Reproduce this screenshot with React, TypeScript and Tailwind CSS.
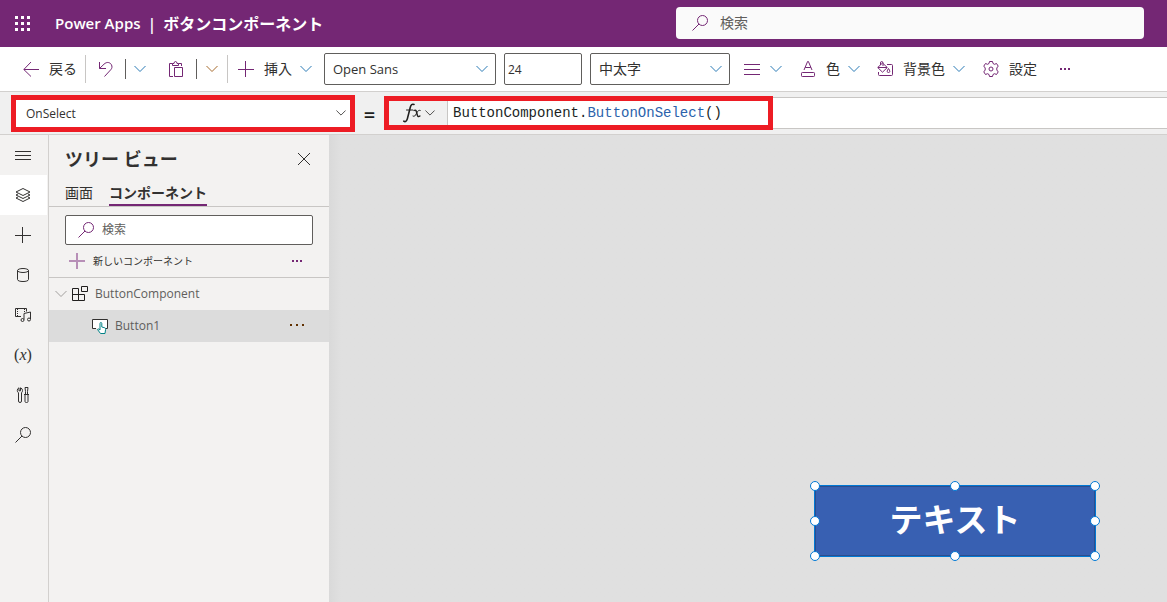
import React, { useState } from "react";

type IconProps = { className?: string; children: React.ReactNode; box?: string };

function Icon({ className = "size-4", children, box = "0 0 16 16" }: IconProps) {
  return (
    <svg viewBox={box} className={`shrink-0 ${className}`} fill="none" stroke="currentColor" strokeWidth="1" aria-hidden="true">
      {children}
    </svg>
  );
}

const Chevron = ({ className = "w-3 h-2 text-[#2a7ab5]" }: { className?: string }) => (
  <Icon box="0 0 12 8" className={className}>
    <path d="M.5 1 6 6.5 11.5 1" />
  </Icon>
);

const Search = ({ className = "size-4" }: { className?: string }) => (
  <Icon className={className}>
    <circle cx="10.5" cy="5.5" r="5" />
    <path d="M7 9 .5 15.5" />
  </Icon>
);

const Plus = ({ className = "size-4" }: { className?: string }) => (
  <Icon className={className}>
    <path d="M7.5 0v16M0 8.5h16" />
  </Icon>
);

const Dots = ({ className = "w-3 h-2" }: { className?: string }) => (
  <Icon box="0 0 12 8" className={className}>
    <path d="M1 3h2v2H1zM5 3h2v2H5zM9 3h2v2H9z" fill="currentColor" stroke="none" />
  </Icon>
);

const Rule = ({ tall = false }: { tall?: boolean }) => (
  <span className={tall ? "h-7 w-px bg-[#c8c6c4]" : "h-5 w-px bg-[#605e5c]"} />
);

type FieldProps = { label: string; options: string[]; className: string; chevron: string; pad?: string };

function Dropdown({ label, options, className, chevron, pad = "pl-2" }: FieldProps) {
  return (
    <div className={`grid items-center ${className}`}>
      <select
        aria-label={label}
        className={`h-full w-full appearance-none bg-transparent pr-6 text-[#323130] outline-none [grid-area:1/1] ${pad}`}
      >
        {options.map((o) => (
          <option key={o}>{o}</option>
        ))}
      </select>
      <Chevron className={`pointer-events-none h-2 justify-self-end [grid-area:1/1] ${chevron}`} />
    </div>
  );
}

function Header() {
  return (
    <header className="flex h-[47px] items-center bg-[#742774] pl-[15px] pr-[23px] text-white">
      <button aria-label="アプリ起動ツール" className="size-4">
        <svg viewBox="0 0 16 16" className="size-4" fill="currentColor" aria-hidden="true">
          {[0, 6, 12].map((y) => [0, 6, 12].map((x) => <rect key={`${x}-${y}`} x={x} y={y} width="3" height="3" />))}
        </svg>
      </button>
      <h1 className="ml-6 flex items-center gap-[7px] whitespace-nowrap font-semibold">
        <span className="text-[15px]">Power Apps</span>
        <span>|</span>
        <span className="text-base font-bold">ボタンコンポーネント</span>
      </h1>
      <label className="mb-px ml-auto flex h-8 w-[468px] items-center gap-3 rounded bg-[#fafafa] pl-4 text-[#742774]">
        <Search />
        <input aria-label="検索" placeholder="検索" className="min-w-0 flex-1 bg-transparent text-sm outline-none placeholder:text-[#605e5c]" />
      </label>
    </header>
  );
}

function Toolbar() {
  return (
    <div role="toolbar" className="flex h-[45px] items-center whitespace-nowrap border-b border-[#d2d0ce] bg-white pl-[23px] text-sm text-[#323130]">
      <button className="flex items-center gap-[10px]">
        <Icon className="size-4 text-[#742774]">
          <path d="M8 1 .8 8.500l7.200 7M1 8.500h15" />
        </Icon>
        戻る
      </button>
      <div className="ml-2 flex items-center">
        <Rule tall />
        <button aria-label="元に戻す" className="ml-3 mr-[11px] text-[#742774]">
          <Icon>
            <path d="M1.5 1v6.5H8M1.5 7.5 6 3.200c3-2.900 6-1.700 7.300.3 1.200 2 .7 4-.6 5.300L6.500 15.500" />
          </Icon>
        </button>
        <Rule />
        <button aria-label="元に戻すオプション" className="ml-2 mr-[22px]"><Chevron /></button>
        <button aria-label="貼り付け" className="mr-3 text-[#742774]">
          <Icon>
            <path d="M5 15.500H1.500v-13h3M10.500 2.500h3V5M4.500 4.500v-2H6q0-2 1.500-2t1.500 2h1.500v2zM6.500 6.500h8v9h-8z" />
          </Icon>
        </button>
        <Rule />
        <button aria-label="貼り付けオプション" className="mx-[9px]"><Chevron className="h-2 w-3 text-[#a66a2c]" /></button>
        <Rule tall />
      </div>
      <button className="ml-[10px] flex items-center gap-2">
        <Plus className="mr-[2px] size-4 text-[#742774]" />
        挿入
        <Chevron />
      </button>
      <Dropdown label="フォント" options={["Open Sans"]} className="ml-3 h-8 w-[172px] rounded-xs border border-[#605e5c] text-[13px]" chevron="w-3 mr-[7px] text-[#2a7ab5]" />
      <input aria-label="フォント サイズ" defaultValue="24" className="ml-2 h-8 w-[78px] rounded-xs border border-[#605e5c] pl-[3px] text-xs outline-none" />
      <Dropdown label="フォントの太さ" options={["中太字"]} className="ml-2 h-8 w-[140px] rounded-xs border border-[#605e5c] text-sm" chevron="w-3 mr-[7px] text-[#2a7ab5]" />
      <button aria-label="配置" className="ml-[14px] flex items-center gap-[10px]">
        <Icon className="size-4 text-[#742774]"><path d="M0 3.500h16M0 8.500h16M0 13.500h16" /></Icon>
        <Chevron />
      </button>
      <button className="ml-[18px] flex items-center gap-2">
        <Icon className="mr-[2px] size-4 text-[#742774]">
          <path d="M4 9 7.600.5h.8L12 9M5.200 6.500h5.600" />
          <rect x="1.500" y="11.500" width="13" height="4" rx=".8" />
        </Icon>
        色
        <Chevron />
      </button>
      <button className="ml-[17px] flex items-center gap-2">
        <Icon className="mr-[2px] size-4 text-[#742774]">
          <path d="M10 3.500h4.500q1 0 1 1v9q0 1-1 1h-12q-1 0-1-1V11" />
          <path d="M.7 6.500 5.500 2l4.800 4.500-4.800 4.700zM1 6.500h9M3.500 4V2q0-1.500 1.200-1.500T6 2v3" />
          <path d="M11.500 7.500c1.600 2.300 1.900 4 0 4s-1.600-1.700 0-4z" />
        </Icon>
        背景色
        <Chevron />
      </button>
      <button className="ml-[18px] flex items-center gap-[10px]">
        <Icon className="size-4 text-[#742774]">
          <path d="M6.500.5h3l.5 2 1.500.8 2-.8 1.700 2.600L13.800 7v2l1.400 1.900-1.700 2.600-2-.8-1.500.8-.5 2h-3l-.5-2-1.500-.8-2 .8L.8 10.900 2.200 9V7L.8 5.100l1.700-2.600 2 .8L6 2.500z" />
          <circle cx="8" cy="8" r="2" />
        </Icon>
        設定
      </button>
      <button aria-label="その他" className="ml-[22px] text-[#742774]"><Dots /></button>
    </div>
  );
}

function FormulaBar() {
  const [formula, setFormula] = useState("ButtonComponent.ButtonOnSelect()");
  const parts = formula.split(/(ButtonOnSelect)/);
  return (
    <div className="flex h-[43px] items-center border-b border-[#d2d0ce] bg-[#f0f0f0] pl-[11px]">
      <Dropdown label="プロパティ" options={["OnSelect"]} className="h-[37px] w-[344px] border-5 border-[#ed1c24] bg-white text-xs" pad="pl-[10px] pt-[2px]" chevron="w-[10px] mr-1 text-[#323130]" />
      <span className="w-[29px] pt-1 text-center text-xl font-semibold text-[#201f1e]">=</span>
      <div className="flex h-[34px] w-[389px] border-5 border-[#ed1c24] bg-white">
        <button aria-label="数式" className="flex w-[59px] items-center gap-1 border-r border-[#c8c6c4] bg-[#f0f0f0] pl-[14px]">
          <svg viewBox="0 0 18 20" className="h-5 w-[18px] text-[#201f1e]" fill="none" stroke="currentColor" strokeLinecap="round" aria-hidden="true">
            <path d="M.8 18.200c1.600 1.200 3-.2 3.600-2.600L7.300 4.200C7.900 1.700 9.200.6 11 1.500" strokeWidth="1.600" />
            <path d="M3.500 7h6.300" />
            <path d="M11 7.500c1.500-.9 2.200 0 2.500 1.500l.8 3c.4 1.600 1.200 2.200 2.600 1" strokeWidth="1.400" />
            <path d="M17.200 7.400c-2-.8-3 1.600-4 3.500-.9 1.800-1.700 3-3.200 2.200" />
          </svg>
          <Chevron className="h-2 w-[10px] text-[#323130]" />
        </button>
        <div className="grid flex-1 items-center pl-[5px] font-[Liberation_Mono,monospace] text-sm">
          <span aria-hidden="true" className="text-[#201f1e] [grid-area:1/1]">
            {parts.map((p, i) => (
              <span key={i} className={p === "ButtonOnSelect" ? "text-[#2b62ab]" : ""}>{p}</span>
            ))}
          </span>
          <input
            aria-label="数式の入力"
            value={formula}
            onChange={(e) => setFormula(e.target.value)}
            className="min-w-0 bg-transparent text-transparent caret-black outline-none [grid-area:1/1]"
          />
        </div>
      </div>
      <div className="h-8 flex-1 border-y border-[#c8c6c4] bg-white" />
    </div>
  );
}

const railItems: { label: string; icon: React.ReactNode }[] = [
  { label: "メニュー", icon: <Icon><path d="M0 4.500h16M0 8.500h16M0 12.500h16" /></Icon> },
  {
    label: "ツリー ビュー",
    icon: <Icon><path d="m8 1.500 7 3.500-7 3.500L1 5zM3 7 1 8l7 3.500L15 8l-2-1M3 10l-2 1 7 3.500 7-3.500-2-1" /></Icon>,
  },
  { label: "挿入", icon: <Plus /> },
  {
    label: "データ",
    icon: <Icon><ellipse cx="8" cy="3.500" rx="5.500" ry="2" /><path d="M2.500 3.500v9c0 2.700 11 2.700 11 0v-9" /></Icon>,
  },
  {
    label: "メディア",
    icon: (
      <Icon>
        <path d="M6 9.500H.5v-8h11v3M9 12.500v-6l6.500-1.500v7" />
        <path d="M2.500 2v7M9.500 2v3" strokeDasharray="1 1" />
        <circle cx="7.500" cy="13" r="1.500" /><circle cx="14" cy="12.500" r="1.500" />
      </Icon>
    ),
  },
  { label: "変数", icon: <span className="font-[Liberation_Serif,serif] text-base leading-none">(<i>x</i>)</span> },
  {
    label: "詳細ツール",
    icon: (
      <Icon>
        <path d="M4 .8v3h1.500v-3Q7.500 1.500 7.500 3.500 7.500 5 6.500 5.800V14q0 1.500-1.500 1.500T3.500 14V5.800Q2.300 5 2.300 3.500 2.300 1.500 4 .8M10 .5h3l-.5 4v3h-2v-3zM9 7.500h5M10 8v6.500q0 1 1.500 1t1.500-1V8" />
      </Icon>
    ),
  },
  { label: "検索", icon: <Search /> },
];

function Rail() {
  return (
    <nav className="w-[49px] shrink-0 border-r border-[#d2d0ce] text-[#323130]">
      {railItems.map((item) => (
        <button
          key={item.label}
          aria-label={item.label}
          className={`flex h-10 w-[47px] items-center justify-center pr-px ${item.label === "ツリー ビュー" ? "bg-white" : ""}`}
        >
          {item.icon}
        </button>
      ))}
    </nav>
  );
}

function TreePanel() {
  return (
    <aside className="w-[280px] shrink-0 text-[#323130]">
      <div className="flex h-[46px] items-center justify-between pl-4 pr-[18px] pt-[2px]">
        <h2 className="text-lg font-bold">ツリー ビュー</h2>
        <button aria-label="閉じる">
          <Icon className="size-[14px]" box="0 0 14 14"><path d="m1 1 12 12M13 1 1 13" /></Icon>
        </button>
      </div>
      <div role="tablist" className="flex h-[26px] items-stretch gap-4 border-b border-[#c8c6c4] pl-4 text-sm leading-5">
        <button role="tab" aria-selected="false" className="border-b-2 border-transparent">画面</button>
        <button role="tab" aria-selected="true" className="border-b-2 border-[#742774] font-semibold">コンポーネント</button>
      </div>
      <label className="mx-4 mt-2 flex h-[30px] items-center gap-2 rounded-xs border border-[#605e5c] bg-white pl-3 text-[#742774]">
        <Search />
        <input aria-label="検索" placeholder="検索" className="min-w-0 flex-1 bg-transparent text-xs outline-none placeholder:text-[#605e5c]" />
      </label>
      <div className="flex h-[33px] items-center justify-between border-b border-[#c8c6c4] pl-5 pr-[26px]">
        <button className="flex items-center gap-2 text-[10px]">
          <Icon className="size-4 text-[#b78fb7]">
            <path d="M8 0v16M0 8h16" strokeWidth="2" />
          </Icon>
          新しいコンポーネント
        </button>
        <button aria-label="その他" className="text-[#742774]"><Dots /></button>
      </div>
      <ul className="text-xs text-[#605e5c]">
        <li className="flex h-8 items-center pl-[6px]">
          <Chevron className="h-2 w-3 text-[#a19f9d]" />
          <Icon className="ml-[5px] mr-[7px] size-4 text-[#201f1e]">
            <path d="M.5 2.500h6v12h-6zM.5 8.500h12v6h-6v-6M9.500.5h6v5h-6z" />
          </Icon>
          ButtonComponent
        </li>
        <li className="flex h-8 items-center bg-[#dcdcdc] pl-[43px] pr-6">
          <Icon className="mr-[7px] size-4 text-[#323130]">
            <path d="M4 10.500H.5v-9h15v9H13" fill="white" />
            <path d="M8 11V5.500q0-1 .9-1t.9 1V9l3 .8q1 .3.8 1.500l-.6 4.200H8.500L5.500 11.500q1-1.200 2.500.5z" fill="white" stroke="#038387" />
          </Icon>
          Button1
          <button aria-label="Button1 のその他の操作" className="ml-auto text-[#603000]">
            <Icon box="0 0 16 8" className="h-2 w-4"><path d="M1 2h2v2H1zM7 2h2v2H7zM13 2h2v2h-2z" fill="currentColor" stroke="none" /></Icon>
          </button>
        </li>
      </ul>
    </aside>
  );
}

const handles = [
  "left-0 top-0", "left-1/2 top-0", "left-full top-0",
  "left-0 top-1/2", "left-full top-1/2",
  "left-0 top-full", "left-1/2 top-full", "left-full top-full",
];

function Canvas() {
  return (
    <main className="relative flex-1 overflow-hidden bg-[#e0e0e0] bg-linear-to-r from-[#d9d9d9] to-[#e0e0e0] to-[12px]">
      <div className="absolute left-[486px] top-[351px] h-[70px] w-[280px]">
        <button className="size-full border border-[#2d4d8e] bg-[#3860b2] pb-1 text-[33px] font-bold leading-none text-white outline outline-[#0078d4]">
          テキスト
        </button>
        {handles.map((h) => (
          <span key={h} className={`absolute size-[10px] -translate-1/2 rounded-full border border-[#0078d4] bg-white ${h}`} />
        ))}
      </div>
    </main>
  );
}

export default function App() {
  return (
    <div className="flex min-h-screen flex-col bg-[#f3f2f1] font-[Open_Sans,Noto_Sans_CJK_JP,sans-serif]">
      <Header />
      <Toolbar />
      <FormulaBar />
      <div className="flex flex-1">
        <Rail />
        <TreePanel />
        <Canvas />
      </div>
    </div>
  );
}
